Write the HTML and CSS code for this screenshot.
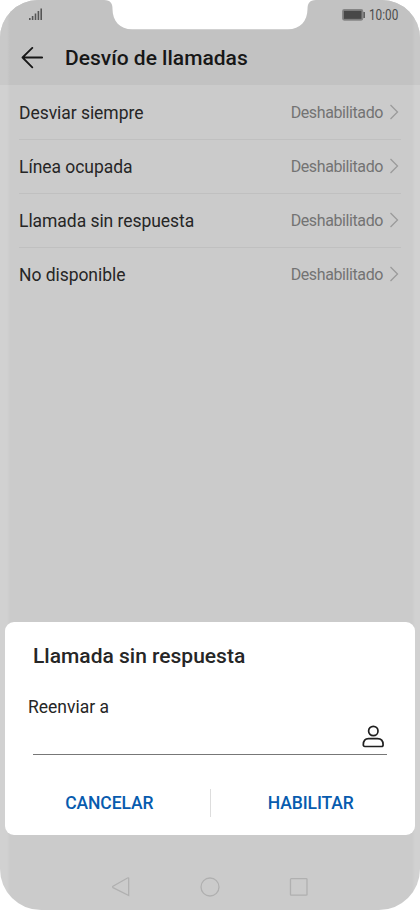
FILE: index.html
```html
<!DOCTYPE html>
<html lang="es">
<head>
<meta charset="utf-8">
<title>Desvío de llamadas</title>
<link rel="stylesheet" href="styles.css">
</head>
<body>
<div class="phone">
  <svg class="notch" width="212" height="30" viewBox="0 0 212 30"><path d="M0 0C7 0 8.500 4 8.500 9C8.500 21 16 29.300 28 29.300H184C196 29.300 203.500 21 203.500 9C203.500 4 205 0 212 0Z" fill="#fff"/></svg>
  <header class="top">
    <div class="status">
      <svg class="signal" width="14" height="13" viewBox="0 0 14 13"><path d="M.8 10v2M3.600 8v4M6.500 5.500v6.500M9.400 3v9M12.200 .5V12" stroke="#555" stroke-width="1.600"/></svg>
      <div class="right">
        <svg width="24" height="12" viewBox="0 0 24 12"><rect x=".7" y=".7" width="20" height="10.400" rx="1.500" fill="#777" stroke="#858585" stroke-width="1.200"/><rect x="2" y="2" width="17.300" height="7.800" fill="#484848"/><path d="M21.300 3h1.700v6h-1.700z" fill="#606060"/></svg>
        <span class="clock">10:00</span>
      </div>
    </div>
    <div class="heading">
      <svg width="22" height="22" viewBox="0 0 22 22" fill="none" stroke="#171717" stroke-width="1.800" stroke-linecap="round" stroke-linejoin="round"><path d="M21.200 10.500H1.500M11.300 .9L1.500 10.500L11.300 20.300"/></svg>
      <h1>Desvío de llamadas</h1>
    </div>
  </header>
  <main class="list">
    <div class="row"><span class="name">Desviar siempre</span><span class="value">Deshabilitado</span><svg width="10" height="16" viewBox="0 0 10 16"><path d="M1.500 1l7 7l-7 7"/></svg></div>
    <div class="row"><span class="name">Línea ocupada</span><span class="value">Deshabilitado</span><svg width="10" height="16" viewBox="0 0 10 16"><path d="M1.500 1l7 7l-7 7"/></svg></div>
    <div class="row"><span class="name">Llamada sin respuesta</span><span class="value">Deshabilitado</span><svg width="10" height="16" viewBox="0 0 10 16"><path d="M1.500 1l7 7l-7 7"/></svg></div>
    <div class="row"><span class="name">No disponible</span><span class="value">Deshabilitado</span><svg width="10" height="16" viewBox="0 0 10 16"><path d="M1.500 1l7 7l-7 7"/></svg></div>
  </main>
  <section class="dialog">
    <h2>Llamada sin respuesta</h2>
    <label>Reenviar a</label>
    <div class="field">
      <svg width="22" height="23" viewBox="0 0 22 23" fill="none" stroke="#202020" stroke-width="1.700"><circle cx="11.300" cy="6" r="4.700"/><path d="M1.300 19.700C1.300 15.500 3.300 13.700 6.500 13.700H15.500C19 13.700 21.100 15.500 21.100 19.700Q21.100 21.500 19.500 21.500H2.900Q1.300 21.500 1.300 19.700Z"/></svg>
    </div>
    <div class="actions">
      <span class="action">CANCELAR</span>
      <i></i>
      <span class="action">HABILITAR</span>
    </div>
  </section>
  <nav class="nav">
    <svg width="20" height="20" viewBox="0 0 20 20"><path d="M17.700 1.200V18.500L2 10.600Q1.300 10 2 9.300L16.500 1Q17.700.5 17.700 1.200Z"/></svg>
    <svg width="20" height="20" viewBox="0 0 20 20"><circle cx="10" cy="10" r="9"/></svg>
    <svg width="20" height="20" viewBox="0 0 20 20"><rect x="1.500" y="1.700" width="16.500" height="16.500" rx=".8"/></svg>
  </nav>
</div>
</body>
</html>
```
FILE: styles.css
```css
* { box-sizing: border-box; }
body { margin: 0; background: #fff; font-family: Roboto, sans-serif; color: #262626; }
.phone {
  position: relative;
  display: flex;
  flex-direction: column;
  width: 420px;
  height: 909.5px;
  overflow: hidden;
  border-radius: 38px 38px 41px 41px;
  background: linear-gradient(90deg, #d1d1d1 0, #d1d1d1 7px, #cbcbcb 10px, #cbcbcb 412px, #d1d1d1 415px);
}
.notch { position: absolute; left: 104px; top: 0; }
.top {
  height: 85px;
  flex: none;
  background: linear-gradient(90deg, #c9c9c9 0, #c9c9c9 7px, #c2c2c2 10px, #c2c2c2 412px, #c8c8c8 415px);
}
.status { display: flex; justify-content: space-between; height: 30px; padding: 8px 22px 0 29px; }
.right { display: flex; align-items: flex-start; gap: 3px; padding-top: 1px; }
.clock { width: 29px; font-size: 14px; line-height: 15px; color: #4c4c4c; margin-top: -1px; white-space: nowrap; transform: scaleX(.84); transform-origin: left; }
.heading { display: flex; align-items: center; height: 55px; padding-left: 21px; gap: 22px; }
h1, h2 { margin: 0; font-weight: 500; font-size: 21px; white-space: nowrap; }
h1 { color: #171717; }
.list { flex: 1; padding: 1px 19px 0; }
.row { display: flex; align-items: center; height: 54px; border-bottom: 1px solid #c0c0c0; }
.row:last-child { border-bottom-color: transparent; }
.name { flex: 1; font-size: 17.500px; letter-spacing: -.05px; }
.value { font-size: 16px; letter-spacing: -.4px; color: #737373; margin-right: 6px; }
.row svg { fill: none; stroke: #9b9b9b; stroke-width: 1.300; margin: -2px 2px 0 0; }
.dialog { flex: none; width: 410px; height: 213px; margin-left: 5px; background: #fff; border-radius: 9px; display: flex; flex-direction: column; }
h2 { line-height: 24px; margin: 22px 0 0 28px; }
label { font-size: 17.500px; line-height: 20px; margin: 29px 0 0 23px; }
.field { display: flex; justify-content: flex-end; margin: 8px 28px 0; height: 30px; padding-right: 3px; border-bottom: 1px solid #777; }
.actions { display: flex; align-items: center; height: 56px; margin: 20px 4px 0 2px; }
.action { flex: 1; text-align: center; color: #075bae; font-weight: 500; font-size: 17.500px; letter-spacing: -.1px; }
.action:first-child { padding-left: 2px; }
.actions i { width: 1px; height: 28px; background: #ddd; }
.nav { flex: none; height: 74.5px; display: flex; justify-content: center; gap: 69px; padding-top: 42px; }
.nav svg { fill: none; stroke: #b0b0b0; stroke-width: 1.300; }
```
